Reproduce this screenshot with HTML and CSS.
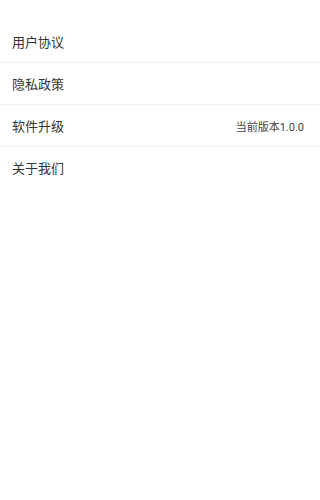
FILE: index.html
```html
<!DOCTYPE html>
<html lang="zh">
<head>
<meta charset="utf-8">
<link rel="stylesheet" href="styles.css">
</head>
<body>
<div class="list">
  <div class="row"><span class="label">用户协议</span></div>
  <div class="row"><span class="label">隐私政策</span></div>
  <div class="row"><span class="label">软件升级</span><span class="value">当前版本1.0.0</span></div>
  <div class="row last"><span class="label">关于我们</span></div>
</div>
</body>
</html>
```
FILE: styles.css
```css
html, body {
  margin: 0;
  padding: 0;
  background: #fff;
}
body {
  font-family: Roboto, "Noto Sans CJK SC", sans-serif;
  color: #333;
}
.list {
  padding-top: 21px;
}
.row {
  height: 41px;
  display: flex;
  align-items: center;
  justify-content: space-between;
  padding: 0 16px 0 12px;
  border-bottom: 1px solid #eeeeee;
}
.row.last {
  border-bottom: none;
}
.label {
  font-size: 13px;
}
.value {
  font-size: 11px;
  color: #444;
}
```
